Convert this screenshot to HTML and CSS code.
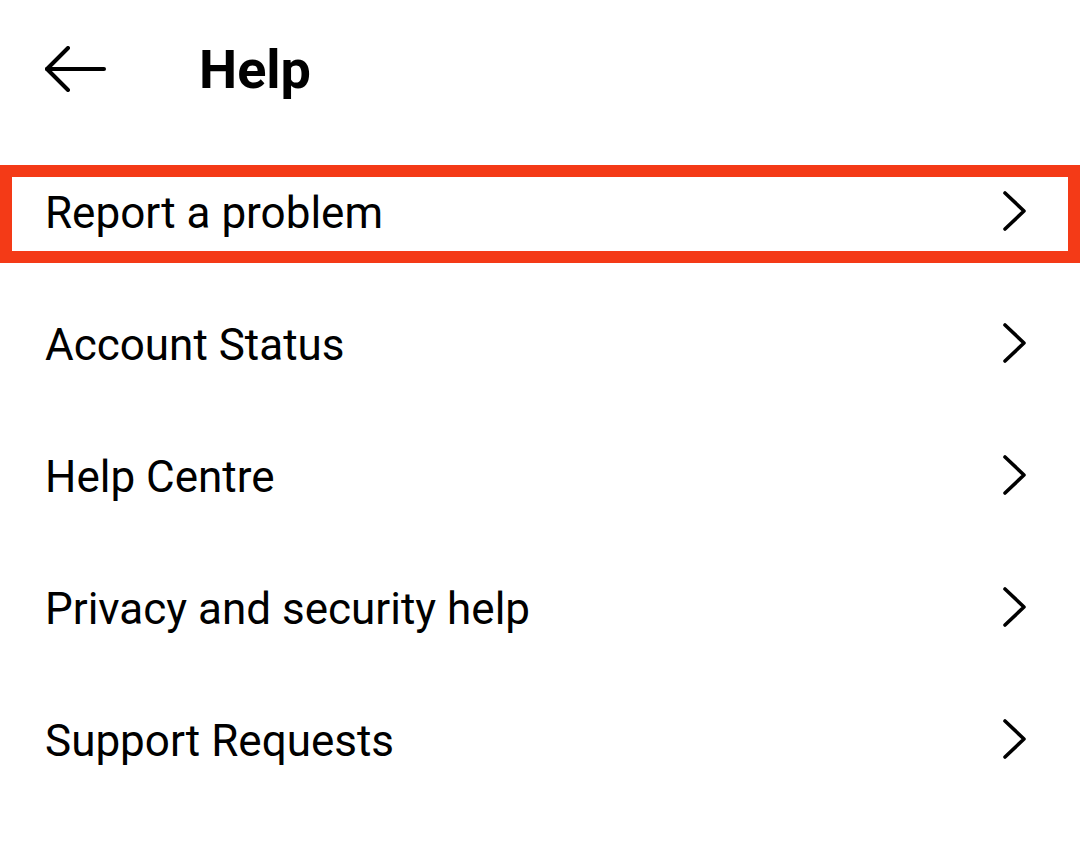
FILE: index.html
```html
<!DOCTYPE html>
<html lang="en">
<head>
<meta charset="utf-8">
<title>Help</title>
<link rel="stylesheet" href="styles.css">
</head>
<body>
<div class="screen">
  <header class="topbar">
    <span class="back" aria-label="Back">
      <svg width="62" height="46" viewBox="0 0 62 46" fill="none" stroke="#000" stroke-width="4" stroke-linecap="round" stroke-linejoin="round">
        <path d="M2 23 H59"/>
        <path d="M23 2 L2 23 L23 44"/>
      </svg>
    </span>
    <h1 class="title">Help</h1>
  </header>
  <ul class="menu">
    <li class="item item-highlight"><span class="label">Report a problem</span><span class="chev"><svg width="26" height="42" viewBox="0 0 26 42" fill="none" stroke="#000" stroke-width="3.6" stroke-linecap="round" stroke-linejoin="round"><path d="M3 3 L22 21 L3 39"/></svg></span></li>
    <li class="item"><span class="label">Account Status</span><span class="chev"><svg width="26" height="42" viewBox="0 0 26 42" fill="none" stroke="#000" stroke-width="3.6" stroke-linecap="round" stroke-linejoin="round"><path d="M3 3 L22 21 L3 39"/></svg></span></li>
    <li class="item"><span class="label">Help Centre</span><span class="chev"><svg width="26" height="42" viewBox="0 0 26 42" fill="none" stroke="#000" stroke-width="3.6" stroke-linecap="round" stroke-linejoin="round"><path d="M3 3 L22 21 L3 39"/></svg></span></li>
    <li class="item"><span class="label">Privacy and security help</span><span class="chev"><svg width="26" height="42" viewBox="0 0 26 42" fill="none" stroke="#000" stroke-width="3.6" stroke-linecap="round" stroke-linejoin="round"><path d="M3 3 L22 21 L3 39"/></svg></span></li>
    <li class="item"><span class="label">Support Requests</span><span class="chev"><svg width="26" height="42" viewBox="0 0 26 42" fill="none" stroke="#000" stroke-width="3.6" stroke-linecap="round" stroke-linejoin="round"><path d="M3 3 L22 21 L3 39"/></svg></span></li>
  </ul>
</div>
</body>
</html>
```
FILE: styles.css
```css
html, body {
  margin: 0;
  padding: 0;
  background: #fff;
}
body {
  font-family: Roboto, "Liberation Sans", Arial, sans-serif;
  color: #000;
  width: 1080px;
  height: 848px;
  overflow: hidden;
}
.screen {
  display: flex;
  flex-direction: column;
}
.topbar {
  height: 138px;
  display: flex;
  align-items: center;
  padding-left: 45px;
  gap: 92px;
  box-sizing: border-box;
}
.back {
  display: flex;
  width: 62px;
  height: 46px;
}
.title {
  margin: 0;
  font-size: 54px;
  font-weight: 700;
  line-height: 1;
  padding-top: 2px;
}
.menu {
  list-style: none;
  margin: 0;
  padding: 7px 0 0;
}
.item {
  position: relative;
  height: 132px;
  display: flex;
  align-items: center;
  justify-content: space-between;
  padding: 0 52px 0 45px;
  box-sizing: border-box;
}
.label {
  font-size: 44px;
  line-height: 1;
  padding-top: 3px;
}
.chev {
  display: flex;
  width: 26px;
  height: 42px;
}
.item-highlight::after {
  content: "";
  position: absolute;
  left: 0;
  right: 0;
  top: 20px;
  height: 98px;
  border: 12px solid #f43a17;
  box-sizing: border-box;
  pointer-events: none;
}
```
